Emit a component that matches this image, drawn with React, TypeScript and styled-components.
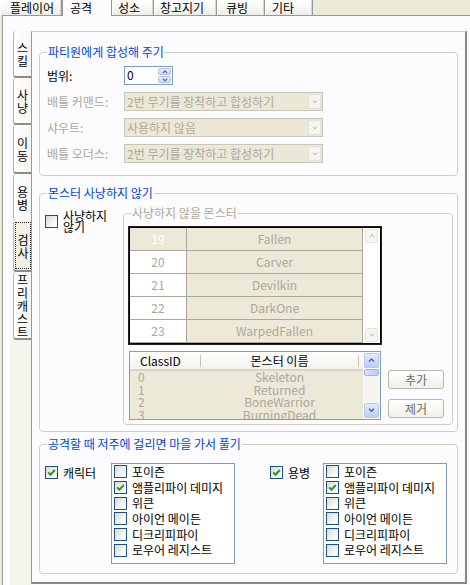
import styled, { createGlobalStyle } from 'styled-components'

const GlobalStyle = createGlobalStyle`
  html, body { margin: 0; padding: 0; background: #ECE9D8; }
  body {
    font-family: "Noto Sans CJK KR", "Noto Sans", sans-serif;
    font-size: 12px;
    color: #000;
  }
  * { box-sizing: border-box; }
`

const topTabs = [
  { label: '플레이어', w: 62, pl: 9 },
  { label: '공격', w: 50, pl: 7, active: true },
  { label: '성소', w: 42, pl: 5 },
  { label: '창고지기', w: 63, pl: 5 },
  { label: '큐빙', w: 48, pl: 8 },
  { label: '기타', w: 48, pl: 6 },
]

const sideTabs = [
  { label: '스킬', h: 47, sep: true },
  { label: '사냥', h: 47, sep: true },
  { label: '이동', h: 49, sep: true },
  { label: '용병', h: 47 },
  { label: '검사', h: 51, sep: true, focus: true },
  { label: '프리캐스트', h: 68, sep: true },
]

const gridRows = [
  { id: '19', name: 'Fallen', sel: true },
  { id: '20', name: 'Carver' },
  { id: '21', name: 'Devilkin' },
  { id: '22', name: 'DarkOne' },
  { id: '23', name: 'WarpedFallen' },
]

const monsters = [
  ['0', 'Skeleton'],
  ['1', 'Returned'],
  ['2', 'BoneWarrior'],
  ['3', 'BurningDead'],
]

const curses = ['포이즌', '앰플리파이 데미지', '위큰', '아이언 메이든', '디크리피파이', '로우어 레지스트']

const Screen = styled.div`
  width: 470px;
  height: 585px;
  overflow: hidden;
  display: flex;
  flex-direction: column;
  background: #ECE9D8;
`

const TabRow = styled.div`
  display: flex;
  height: 15px;
  position: relative;
  z-index: 1;
`

const TopTab = styled.div<{ $w: number; $pl: number; $active?: boolean }>`
  width: ${p => p.$w}px;
  height: ${p => (p.$active ? 16 : 15)}px;
  padding-left: ${p => p.$pl}px;
  line-height: 15px;
  white-space: nowrap;
  border-right: 1px solid #919B9C;
  border-left: 1px solid ${p => (p.$active ? '#919B9C' : '#FFFFFF')};
  background: ${p => (p.$active ? '#FCFCFE' : 'linear-gradient(#FFFFFF, #EEEDE7)')};
  box-shadow: ${p => (p.$active ? 'none' : 'inset -1px 0 0 #D9D6CA')};
`

const Page = styled.div`
  flex: 1;
  margin-left: 2px;
  border-left: 1px solid #919B9C;
  border-top: 1px solid #919B9C;
  background: #FCFCFE;
  padding: 15px 0 0 7px;
  display: flex;
`

const SideTabs = styled.div`
  width: 21px;
  display: flex;
  flex-direction: column;
`

const SideTab = styled.div<{ $h: number; $sep?: boolean; $focus?: boolean }>`
  height: ${p => p.$h}px;
  margin-left: 3px;
  display: flex;
  flex-direction: column;
  align-items: center;
  justify-content: center;
  border-left: 1px solid #B9B8B0;
  border-bottom: ${p => (p.$sep ? '2px solid #8E8D85' : '0')};
  border-radius: 3px 0 0 3px;
  background: ${p => (p.$focus ? '#F1EFE6' : 'linear-gradient(to right, #FFFFFF, #F7F6F2)')};
  padding: ${p => (p.$focus ? '1px 0 1px 1px' : '0')};
`

const SideLabel = styled.div<{ $focus?: boolean }>`
  display: flex;
  flex-direction: column;
  align-items: center;
  justify-content: center;
  line-height: 13px;
  align-self: stretch;
  flex: ${p => (p.$focus ? 1 : 'none')};
  border: ${p => (p.$focus ? '1px dotted #222' : '0')};
`

const SideFill = styled.div`
  flex: 1;
  background: #F4F3EC;
`

const Panel = styled.div`
  width: 436px;
  height: 553px;
  border-left: 1px solid #919B9C;
  border-top: 1px solid #D0CEC2;
  border-right: 2px solid #8A887D;
  border-bottom: 2px solid #8A887D;
  background: #FCFCFE;
  padding: 13px 7px 0 7px;
  display: flex;
  flex-direction: column;
`

const Group = styled.fieldset<{ $h: number; $w?: number; $mt?: number }>`
  margin: ${p => p.$mt ?? 0}px 0 0 0;
  height: ${p => p.$h}px;
  width: ${p => (p.$w ? `${p.$w}px` : 'auto')};
  border: 1px solid #D0D0BF;
  border-radius: 4px;
  padding: 0;
  min-width: 0;
`

const Legend = styled.legend<{ $muted?: boolean }>`
  margin-left: 7px;
  padding: 0 1px;
  line-height: 14px;
  font-size: 12px;
  color: ${p => (p.$muted ? '#ACA899' : '#0046D5')};
`

const FormGrid = styled.div`
  display: grid;
  grid-template-columns: 77px 199px;
  grid-auto-rows: 19px;
  row-gap: 7px;
  padding: 7px 0 0 7px;
`

const FieldLabel = styled.span<{ $muted?: boolean }>`
  line-height: 19px;
  white-space: nowrap;
  color: ${p => (p.$muted ? '#ACA899' : '#000')};
`

const Spin = styled.div`
  width: 49px;
  height: 19px;
  border: 1px solid #7F9DB9;
  background: #fff;
  display: flex;
`

const SpinValue = styled.span`
  flex: 1;
  padding-left: 2px;
  line-height: 16px;
`

const SpinButtons = styled.div`
  width: 14px;
  display: flex;
  flex-direction: column;
  gap: 1px;
  padding: 1px 1px 1px 0;
`

const SpinBtn = styled.div`
  flex: 1;
  display: flex;
  align-items: center;
  justify-content: center;
  border: 1px solid #AFC2EC;
  border-radius: 2px;
  background: linear-gradient(#EEF3FE, #C5D4F8);
`

const Combo = styled.div`
  width: 199px;
  height: 19px;
  border: 1px solid #C9C7BA;
  background: #EBE8D8;
  display: flex;
  color: #ACA899;
`

const ComboText = styled.span`
  flex: 1;
  padding-left: 2px;
  line-height: 17px;
  white-space: nowrap;
  overflow: hidden;
`

const ComboBtn = styled.div`
  width: 13px;
  margin: 1px;
  display: flex;
  align-items: center;
  justify-content: center;
  background: #F6F5F0;
  border: 1px solid #E4E2D8;
  border-radius: 2px;
`

const MonsterRow = styled.div`
  display: flex;
  align-items: flex-start;
  padding: 6px 0 0 5px;
`

const CheckLabel = styled.label<{ $w: number; $mt: number; $ml?: number }>`
  width: ${p => p.$w}px;
  margin-top: ${p => p.$mt}px;
  margin-left: ${p => p.$ml ?? 0}px;
  flex: none;
  display: flex;
  align-items: center;
  gap: 5px;
`

const CheckText = styled.span<{ $wrap?: boolean }>`
  line-height: ${p => (p.$wrap ? 11 : 13)}px;
  width: ${p => (p.$wrap ? '52px' : 'auto')};
  white-space: ${p => (p.$wrap ? 'normal' : 'nowrap')};
`

const Box = styled.span`
  width: 13px;
  height: 13px;
  flex: none;
  border: 1px solid #1C5180;
  background: linear-gradient(135deg, #D9D9D3 0%, #F4F4F0 60%, #FFFFFF 100%);
  display: inline-flex;
  align-items: center;
  justify-content: center;
`

const InnerBody = styled.div`
  display: flex;
  align-items: flex-end;
  gap: 7px;
  padding: 7px 0 0 5px;
`

const Column = styled.div`
  display: flex;
  flex-direction: column;
  gap: 7px;
`

const Grid = styled.div`
  width: 252px;
  height: 117px;
  border: 1px solid #000;
  outline: 1px solid #222;
  display: flex;
  background: #fff;
`

const GridBody = styled.div`
  flex: 1;
  display: flex;
  flex-direction: column;
`

const GridRow = styled.div`
  display: flex;
  height: 23px;
  border-bottom: 1px solid #ACA899;
`

const GridCell = styled.div<{ $w?: number; $bg: string; $fg: string }>`
  width: ${p => (p.$w ? `${p.$w}px` : 'auto')};
  flex: ${p => (p.$w ? 'none' : 1)};
  background: ${p => p.$bg};
  color: ${p => p.$fg};
  text-align: center;
  line-height: 22px;
  border-right: 1px solid #ACA899;
`

const GridScroll = styled.div`
  width: 17px;
  display: flex;
  flex-direction: column;
  justify-content: space-between;
  padding: 1px 2px;
`

const DisabledArrow = styled.div`
  height: 14px;
  display: flex;
  align-items: center;
  justify-content: center;
  background: #F6F5F0;
  border: 1px solid #E4E2D8;
  border-radius: 2px;
`

const ListView = styled.div`
  width: 252px;
  height: 69px;
  border: 1px solid #7F9DB9;
  display: flex;
  background: #ECE9D8;
`

const ListMain = styled.div`
  flex: 1;
  display: flex;
  flex-direction: column;
  overflow: hidden;
`

const ListHeader = styled.div`
  height: 19px;
  flex: none;
  display: flex;
  align-items: center;
  background: linear-gradient(#FFFFFF, #F3F2EC);
  border-bottom: 2px solid #D9D5C5;
`

const HeadCell = styled.div<{ $w: number; $center?: boolean }>`
  width: ${p => p.$w}px;
  padding-left: ${p => (p.$center ? 0 : 10)}px;
  text-align: ${p => (p.$center ? 'center' : 'left')};
  line-height: 17px;
  white-space: nowrap;
`

const HeadSep = styled.div`
  width: 1px;
  height: 12px;
  background: #C7C5B2;
`

const ListRow = styled.div`
  display: flex;
  height: 12.5px;
  line-height: 12.5px;
  color: #ACA899;
  flex: none;
`

const RowCell = styled.div<{ $w: number; $center?: boolean }>`
  width: ${p => p.$w}px;
  padding-left: ${p => (p.$center ? 0 : 8)}px;
  text-align: ${p => (p.$center ? 'center' : 'left')};
  white-space: nowrap;
`

const ScrollBar = styled.div`
  width: 17px;
  display: flex;
  flex-direction: column;
  background: #F6F5F1;
`

const ScrollBtn = styled.div`
  height: 17px;
  flex: none;
  display: flex;
  align-items: center;
  justify-content: center;
  border: 1px solid #FFFFFF;
  border-radius: 3px;
  background: linear-gradient(#E5EDFE, #B9CCF6);
  box-shadow: inset 0 0 0 1px #B3C6EF;
`

const Thumb = styled.div`
  height: 7px;
  margin: 0 1px;
  border-radius: 2px;
  border: 1px solid #9DB4E6;
  background: linear-gradient(to right, #D3E0FD, #BCCEF8);
`

const Track = styled.div`
  flex: 1;
`

const ButtonCol = styled.div`
  display: flex;
  flex-direction: column;
  gap: 10px;
  padding-bottom: 2px;
`

const Button = styled.div`
  width: 56px;
  height: 19px;
  border: 1px solid #B8B6A9;
  border-radius: 3px;
  background: linear-gradient(#FFFFFF, #F1F0EA);
  color: #6E6C62;
  text-align: center;
  line-height: 17px;
`

const CurseRow = styled.div`
  display: flex;
  align-items: flex-start;
  padding: 12px 0 0 5px;
`

const CheckList = styled.div`
  width: 124px;
  height: 101px;
  flex: none;
  border: 1px solid #7F9DB9;
  background: #fff;
  padding-left: 2px;
`

const CheckItem = styled.div`
  height: 15.7px;
  display: flex;
  align-items: center;
  gap: 5px;
  white-space: nowrap;
  line-height: 14px;
`

function Chevron({ dir, color, w = 7 }: { dir: 'up' | 'down'; color: string; w?: number }) {
  return (
    <svg width={w} height={w * 0.6} viewBox="0 0 8 5" style={{ display: 'block' }}>
      <path
        d={dir === 'up' ? 'M1 4.3 L4 1.2 L7 4.3' : 'M1 0.8 L4 3.9 L7 0.8'}
        fill="none"
        stroke={color}
        strokeWidth={1.6}
      />
    </svg>
  )
}

function Tick() {
  return (
    <svg width="9" height="9" viewBox="0 0 9 9" style={{ display: 'block' }}>
      <path d="M1.2 4.4 L3.5 6.7 L7.8 2" fill="none" stroke="#21A121" strokeWidth="2" />
    </svg>
  )
}

function CheckBox({ checked }: { checked?: boolean }) {
  return <Box>{checked && <Tick />}</Box>
}

function DisabledCombo({ text }: { text: string }) {
  return (
    <Combo>
      <ComboText>{text}</ComboText>
      <ComboBtn>
        <Chevron dir="down" color="#C9C7BA" w={6} />
      </ComboBtn>
    </Combo>
  )
}

function CurseList() {
  return (
    <CheckList>
      {curses.map((c, i) => (
        <CheckItem key={c}>
          <CheckBox checked={i === 1} />
          {c}
        </CheckItem>
      ))}
    </CheckList>
  )
}

export default function App() {
  return (
    <>
      <GlobalStyle />
      <Screen>
        <TabRow>
          {topTabs.map(t => (
            <TopTab key={t.label} $w={t.w} $pl={t.pl} $active={t.active}>
              {t.label}
            </TopTab>
          ))}
        </TabRow>
        <Page>
          <SideTabs>
            {sideTabs.map(t => (
              <SideTab key={t.label} $h={t.h} $sep={t.sep} $focus={t.focus}>
                <SideLabel $focus={t.focus}>
                  {[...t.label].map((c, i) => (
                    <span key={i}>{c}</span>
                  ))}
                </SideLabel>
              </SideTab>
            ))}
            <SideFill />
          </SideTabs>
          <Panel>
            <Group $h={131}>
              <Legend>파티원에게 합성해 주기</Legend>
              <FormGrid>
                <FieldLabel>범위:</FieldLabel>
                <Spin>
                  <SpinValue>0</SpinValue>
                  <SpinButtons>
                    <SpinBtn>
                      <Chevron dir="up" color="#4D6185" w={6} />
                    </SpinBtn>
                    <SpinBtn>
                      <Chevron dir="down" color="#4D6185" w={6} />
                    </SpinBtn>
                  </SpinButtons>
                </Spin>
                <FieldLabel $muted>배틀 커맨드:</FieldLabel>
                <DisabledCombo text="2번 무기를 장착하고 합성하기" />
                <FieldLabel $muted>샤우트:</FieldLabel>
                <DisabledCombo text="사용하지 않음" />
                <FieldLabel $muted>배틀 오더스:</FieldLabel>
                <DisabledCombo text="2번 무기를 장착하고 합성하기" />
              </FormGrid>
            </Group>

            <Group $h={246} $mt={10}>
              <Legend>몬스터 사냥하지 않기</Legend>
              <MonsterRow>
                <CheckLabel $w={78} $mt={4}>
                  <CheckBox />
                  <CheckText $wrap>사냥하지 않기</CheckText>
                </CheckLabel>
                <Group $h={219} $w={330}>
                  <Legend $muted>사냥하지 않을 몬스터</Legend>
                  <InnerBody>
                    <Column>
                      <Grid>
                        <GridBody>
                          {gridRows.map(r => (
                            <GridRow key={r.id}>
                              <GridCell
                                $w={57}
                                $bg={r.sel ? '#ECE9D8' : '#FFFFFF'}
                                $fg={r.sel ? '#FFFFFF' : '#ACA899'}
                              >
                                {r.id}
                              </GridCell>
                              <GridCell $bg="#ECE9D8" $fg="#ACA899">
                                {r.name}
                              </GridCell>
                            </GridRow>
                          ))}
                        </GridBody>
                        <GridScroll>
                          <DisabledArrow>
                            <Chevron dir="up" color="#C9C7BA" w={6} />
                          </DisabledArrow>
                          <DisabledArrow>
                            <Chevron dir="down" color="#C9C7BA" w={6} />
                          </DisabledArrow>
                        </GridScroll>
                      </Grid>
                      <ListView>
                        <ListMain>
                          <ListHeader>
                            <HeadCell $w={70}>ClassID</HeadCell>
                            <HeadSep />
                            <HeadCell $w={157} $center>
                              몬스터 이름
                            </HeadCell>
                            <HeadSep />
                          </ListHeader>
                          {monsters.map(([id, name]) => (
                            <ListRow key={id}>
                              <RowCell $w={71}>{id}</RowCell>
                              <RowCell $w={157} $center>
                                {name}
                              </RowCell>
                            </ListRow>
                          ))}
                        </ListMain>
                        <ScrollBar>
                          <ScrollBtn>
                            <Chevron dir="up" color="#4D6185" w={7} />
                          </ScrollBtn>
                          <Thumb />
                          <Track />
                          <ScrollBtn>
                            <Chevron dir="down" color="#4D6185" w={7} />
                          </ScrollBtn>
                        </ScrollBar>
                      </ListView>
                    </Column>
                    <ButtonCol>
                      <Button>추가</Button>
                      <Button>제거</Button>
                    </ButtonCol>
                  </InnerBody>
                </Group>
              </MonsterRow>
            </Group>

            <Group $h={137} $mt={5}>
              <Legend>공격할 때 저주에 걸리면 마을 가서 풀기</Legend>
              <CurseRow>
                <CheckLabel $w={66} $mt={3}>
                  <CheckBox checked />
                  <CheckText>캐릭터</CheckText>
                </CheckLabel>
                <CurseList />
                <CheckLabel $w={53} $mt={3} $ml={35}>
                  <CheckBox checked />
                  <CheckText>용병</CheckText>
                </CheckLabel>
                <CurseList />
              </CurseRow>
            </Group>
          </Panel>
        </Page>
      </Screen>
    </>
  )
}
